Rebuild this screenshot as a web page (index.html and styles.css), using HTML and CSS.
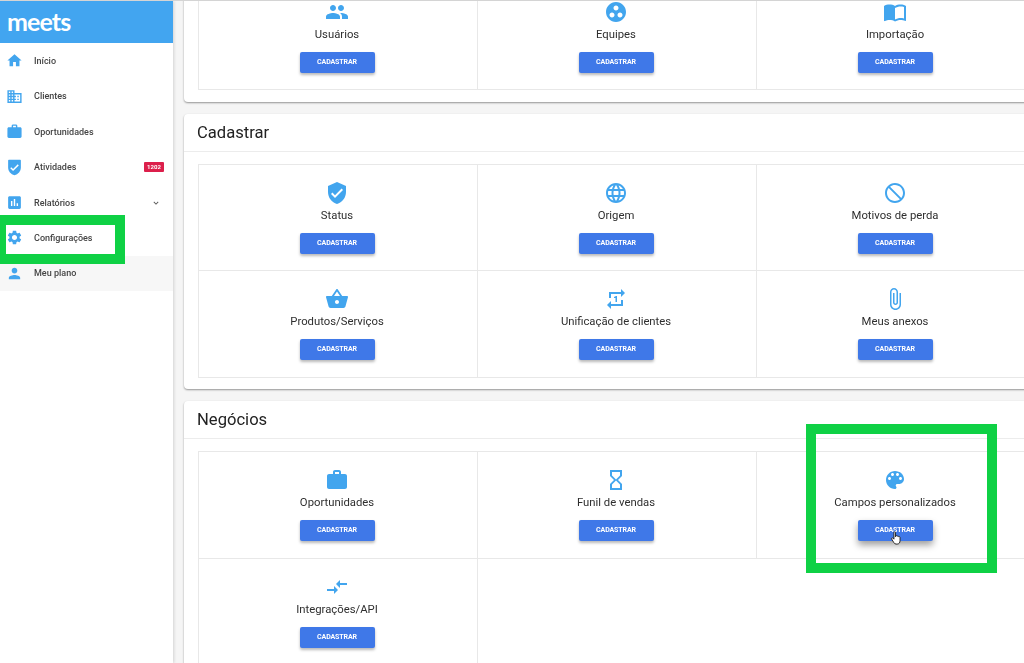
FILE: index.html
```html
<!DOCTYPE html>
<html lang="pt-BR">
<head>
<meta charset="utf-8">
<title>meets</title>
<link rel="stylesheet" href="styles.css">
</head>
<body>
<svg class="defs" width="0" height="0" aria-hidden="true">
<symbol id="i-home" viewBox="0 0 24 24"><path d="M10 20v-6h4v6h5v-8h3L12 3 2 12h3v8z"/></symbol>
<symbol id="i-domain" viewBox="0 0 24 24"><path d="M12 7V3H2v18h20V7H12zM6 19H4v-2h2v2zm0-4H4v-2h2v2zm0-4H4V9h2v2zm0-4H4V5h2v2zm4 12H8v-2h2v2zm0-4H8v-2h2v2zm0-4H8V9h2v2zm0-4H8V5h2v2zm10 12h-8v-2h2v-2h-2v-2h2v-2h-2V9h8v10zm-2-8h-2v2h2v-2zm0 4h-2v2h2v-2z"/></symbol>
<symbol id="i-work" viewBox="0 0 24 24"><path d="M20 6h-4V4c0-1.11-.89-2-2-2h-4c-1.11 0-2 .89-2 2v2H4c-1.11 0-1.99.89-1.99 2L2 19c0 1.11.89 2 2 2h16c1.11 0 2-.89 2-2V8c0-1.11-.89-2-2-2zm-6 0h-4V4h4v2z"/></symbol>
<symbol id="i-verified" viewBox="0 0 24 24"><path d="M12 1L3 5v6c0 5.55 3.84 10.74 9 12 5.16-1.26 9-6.45 9-12V5l-9-4zm-2 16l-4-4 1.41-1.41L10 14.17l6.59-6.59L18 9l-8 8z"/></symbol>
<symbol id="i-shield-flat" viewBox="0 0 24 24"><path fill-rule="evenodd" d="M4 1h16c.55 0 1 .45 1 1v10c0 5.2-3.8 9.6-9 11-5.2-1.4-9-5.800-9-11V2c0-.55.45-1 1-1zm6 16l8-8-1.410-1.420L10 14.170l-2.590-2.580L6 13z"/></symbol>
<symbol id="i-assess" viewBox="0 0 24 24"><path d="M19 3H5c-1.1 0-2 .9-2 2v14c0 1.1.9 2 2 2h14c1.1 0 2-.9 2-2V5c0-1.1-.9-2-2-2zM9 17H7v-7h2v7zm4 0h-2V7h2v10zm4 0h-2v-4h2v4z"/></symbol>
<symbol id="i-settings" viewBox="0 0 24 24"><path d="M19.14 12.94c.04-.3.06-.61.06-.94 0-.32-.02-.64-.07-.94l2.03-1.58c.18-.14.23-.41.12-.61l-1.92-3.32c-.12-.22-.37-.29-.59-.22l-2.39.96c-.5-.38-1.03-.7-1.62-.94l-.36-2.54c-.04-.24-.24-.41-.48-.41h-3.84c-.24 0-.43.17-.47.41l-.36 2.54c-.59.24-1.13.57-1.62.94l-2.39-.96c-.22-.08-.47 0-.59.22L2.74 8.87c-.12.21-.08.47.12.61l2.03 1.58c-.05.3-.09.63-.09.94s.02.64.07.94l-2.03 1.58c-.18.14-.23.41-.12.61l1.92 3.32c.12.22.37.29.59.22l2.39-.96c.5.38 1.03.7 1.62.94l.36 2.54c.05.24.24.41.48.41h3.84c.24 0 .44-.17.47-.41l.36-2.54c.59-.24 1.13-.56 1.62-.94l2.39.96c.22.08.47 0 .59-.22l1.92-3.32c.12-.22.07-.47-.12-.61l-2.01-1.58zM12 15.6c-1.98 0-3.6-1.62-3.6-3.6s1.62-3.6 3.6-3.6 3.6 1.62 3.6 3.6-1.62 3.6-3.6 3.6z"/></symbol>
<symbol id="i-person" viewBox="0 0 24 24"><path d="M12 12c2.21 0 4-1.79 4-4s-1.79-4-4-4-4 1.79-4 4 1.79 4 4 4zm0 2c-2.67 0-8 1.34-8 4v2h16v-2c0-2.66-5.33-4-8-4z"/></symbol>
<symbol id="i-people" viewBox="0 0 24 24"><path d="M16 11c1.66 0 2.99-1.34 2.99-3S17.66 5 16 5c-1.66 0-3 1.34-3 3s1.34 3 3 3zm-8 0c1.66 0 2.99-1.34 2.99-3S9.66 5 8 5C6.34 5 5 6.34 5 8s1.34 3 3 3zm0 2c-2.33 0-7 1.17-7 3.5V19h14v-2.5c0-2.33-4.67-3.5-7-3.5zm8 0c-.29 0-.62.02-.97.05 1.16.84 1.97 1.97 1.97 3.45V19h6v-2.5c0-2.33-4.67-3.5-7-3.5z"/></symbol>
<symbol id="i-group" viewBox="0 0 24 24"><path d="M12 2C6.48 2 2 6.48 2 12s4.48 10 10 10 10-4.48 10-10S17.52 2 12 2zM8 17.5c-1.38 0-2.5-1.12-2.5-2.5s1.12-2.5 2.5-2.5 2.5 1.12 2.5 2.5-1.12 2.5-2.5 2.5zM9.5 8c0-1.38 1.12-2.5 2.5-2.5s2.5 1.12 2.5 2.5-1.12 2.5-2.5 2.5S9.5 9.38 9.5 8zm6.5 9.5c-1.38 0-2.5-1.12-2.5-2.5s1.12-2.5 2.5-2.5 2.5 1.12 2.5 2.5-1.12 2.5-2.5 2.5z"/></symbol>
<symbol id="i-book" viewBox="0 0 24 24"><path d="M21 5c-1.11-.35-2.33-.5-3.5-.5-1.95 0-4.05.4-5.5 1.5-1.45-1.1-3.55-1.5-5.5-1.5S2.45 4.9 1 6v14.65c0 .25.25.5.5.5.1 0 .15-.05.25-.05C3.1 20.45 5.05 20 6.5 20c1.95 0 4.05.4 5.5 1.5 1.35-.85 3.8-1.5 5.5-1.5 1.65 0 3.35.3 4.75 1.05.1.05.15.05.25.05.25 0 .5-.25.5-.5V6c-.6-.45-1.25-.75-2-1zm0 13.5c-1.1-.35-2.3-.5-3.5-.5-1.7 0-4.15.65-5.5 1.5V8c1.35-.85 3.8-1.5 5.5-1.5 1.2 0 2.4.15 3.5.5v11.5z"/></symbol>
<symbol id="i-globe" viewBox="0 0 24 24"><path d="M11.99 2C6.47 2 2 6.48 2 12s4.47 10 9.99 10C17.52 22 22 17.52 22 12S17.52 2 11.99 2zm6.93 6h-2.95c-.32-1.25-.78-2.45-1.38-3.56 1.84.63 3.37 1.91 4.33 3.56zM12 4.04c.83 1.2 1.48 2.53 1.91 3.96h-3.82c.43-1.43 1.08-2.76 1.91-3.96zM4.26 14C4.1 13.36 4 12.69 4 12s.1-1.36.26-2h3.38c-.08.66-.14 1.32-.14 2 0 .68.06 1.34.14 2H4.26zm.82 2h2.95c.32 1.25.78 2.45 1.38 3.56-1.84-.63-3.37-1.9-4.33-3.56zm2.95-8H5.08c.96-1.66 2.49-2.93 4.33-3.56C8.81 5.55 8.35 6.75 8.03 8zM12 19.96c-.83-1.2-1.48-2.53-1.91-3.96h3.82c-.43 1.43-1.08 2.76-1.91 3.96zM14.34 14H9.66c-.09-.66-.16-1.32-.16-2 0-.68.07-1.35.16-2h4.68c.09.65.16 1.32.16 2 0 .68-.07 1.34-.16 2zm.25 5.56c.6-1.11 1.06-2.31 1.38-3.56h2.95c-.96 1.65-2.49 2.93-4.33 3.56zM16.36 14c.08-.66.14-1.32.14-2 0-.68-.06-1.34-.14-2h3.38c.16.64.26 1.31.26 2s-.1 1.36-.26 2h-3.38z"/></symbol>
<symbol id="i-block" viewBox="0 0 24 24"><path d="M12 2C6.48 2 2 6.48 2 12s4.48 10 10 10 10-4.48 10-10S17.52 2 12 2zM4 12c0-4.42 3.58-8 8-8 1.85 0 3.55.63 4.9 1.69L5.69 16.9C4.63 15.55 4 13.85 4 12zm8 8c-1.85 0-3.55-.63-4.9-1.69L18.31 7.1C19.37 8.45 20 10.15 20 12c0 4.42-3.58 8-8 8z"/></symbol>
<symbol id="i-basket" viewBox="0 0 24 24"><path d="M17.21 9l-4.38-6.56c-.19-.28-.51-.42-.83-.42-.32 0-.64.14-.83.43L6.79 9H2c-.55 0-1 .45-1 1 0 .09.01.18.04.27l2.54 9.27c.23.84 1 1.46 1.92 1.46h13c.92 0 1.69-.62 1.93-1.46l2.54-9.27L23 10c0-.55-.45-1-1-1h-4.79zM9 9l3-4.4L15 9H9zm3 8c-1.1 0-2-.9-2-2s.9-2 2-2 2 .9 2 2-.9 2-2 2z"/></symbol>
<symbol id="i-repeat" viewBox="0 0 24 24"><path d="M7 7h10v3l4-4-4-4v3H5v6h2V7zm10 10H7v-3l-4 4 4 4v-3h12v-6h-2v4zm-4-2V9h-1l-2 1v1h1.5v4H13z"/></symbol>
<symbol id="i-clip" viewBox="0 0 24 24"><path d="M16.5 6v11.5c0 2.21-1.79 4-4 4s-4-1.79-4-4V5c0-1.38 1.12-2.5 2.5-2.5s2.5 1.12 2.5 2.5v10.5c0 .55-.45 1-1 1s-1-.45-1-1V6H10v9.5c0 1.38 1.12 2.5 2.5 2.5s2.5-1.12 2.5-2.5V5c0-2.21-1.79-4-4-4S7 2.79 7 5v12.5c0 3.04 2.46 5.5 5.5 5.5s5.5-2.46 5.5-5.5V6h-1.5z"/></symbol>
<symbol id="i-hourglass" viewBox="0 0 24 24"><path d="M6 2v6h.01L6 8.01 10 12l-4 4 .01.01H6V22h12v-5.99h-.01L18 16l-4-4 4-3.99-.01-.01H18V2H6zm10 14.5V20H8v-3.5l4-4 4 4zm-4-5l-4-4V4h8v3.5l-4 4z"/></symbol>
<symbol id="i-palette" viewBox="0 0 24 24"><path d="M12 3c-4.97 0-9 4.03-9 9s4.03 9 9 9c.83 0 1.5-.67 1.5-1.5 0-.39-.15-.74-.39-1.01-.23-.26-.38-.61-.38-.99 0-.83.67-1.5 1.5-1.5H16c2.76 0 5-2.24 5-5 0-4.42-4.03-8-9-8zm-5.5 9c-.83 0-1.5-.67-1.5-1.5S5.67 9 6.5 9 8 9.67 8 10.5 7.33 12 6.5 12zm3-4C8.67 8 8 7.33 8 6.5S8.67 5 9.5 5s1.5.67 1.5 1.5S10.33 8 9.5 8zm5 0c-.83 0-1.5-.67-1.5-1.5S13.67 5 14.5 5s1.5.67 1.5 1.5S15.33 8 14.5 8zm3 4c-.83 0-1.5-.67-1.5-1.5S16.67 9 17.5 9s1.5.67 1.5 1.5-.67 1.5-1.5 1.5z"/></symbol>
<symbol id="i-compare" viewBox="0 0 24 24"><path d="M9.01 14H2v2h7.01v3L13 15l-3.99-4v3zm5.98-1v-3H22V8h-7.01V5L11 9l3.99 4z"/></symbol>
<symbol id="i-more" viewBox="0 0 24 24"><path d="M16.59 8.59L12 13.17 7.41 8.59 6 10l6 6 6-6z"/></symbol>
</svg>

<div class="app">
  <aside class="sidebar">
    <div class="brand">meets</div>
    <nav class="nav">
      <a class="nav-item"><svg class="nav-icon"><use href="#i-home"/></svg><span class="nav-label">Início</span></a>
      <a class="nav-item"><svg class="nav-icon"><use href="#i-domain"/></svg><span class="nav-label">Clientes</span></a>
      <a class="nav-item"><svg class="nav-icon"><use href="#i-work"/></svg><span class="nav-label">Oportunidades</span></a>
      <a class="nav-item"><svg class="nav-icon"><use href="#i-shield-flat"/></svg><span class="nav-label">Atividades</span><span class="badge">1202</span></a>
      <a class="nav-item"><svg class="nav-icon"><use href="#i-assess"/></svg><span class="nav-label">Relatórios</span><svg class="chevron"><use href="#i-more"/></svg></a>
      <a class="nav-item"><svg class="nav-icon"><use href="#i-settings"/></svg><span class="nav-label">Configurações</span></a>
      <a class="nav-item nav-item-muted"><svg class="nav-icon"><use href="#i-person"/></svg><span class="nav-label">Meu plano</span></a>
    </nav>
  </aside>

  <main class="main">
    <div class="scroll">
      <section class="card card-cut">
        <div class="grid">
          <div class="cell"><svg class="cell-icon"><use href="#i-people"/></svg><div class="cell-label">Usuários</div><button class="btn">CADASTRAR</button></div>
          <div class="cell"><svg class="cell-icon"><use href="#i-group"/></svg><div class="cell-label">Equipes</div><button class="btn">CADASTRAR</button></div>
          <div class="cell"><svg class="cell-icon"><use href="#i-book"/></svg><div class="cell-label">Importação</div><button class="btn">CADASTRAR</button></div>
        </div>
      </section>

      <section class="card">
        <h2 class="card-title">Cadastrar</h2>
        <div class="grid">
          <div class="cell"><svg class="cell-icon"><use href="#i-verified"/></svg><div class="cell-label">Status</div><button class="btn">CADASTRAR</button></div>
          <div class="cell"><svg class="cell-icon"><use href="#i-globe"/></svg><div class="cell-label">Origem</div><button class="btn">CADASTRAR</button></div>
          <div class="cell"><svg class="cell-icon icon-flip"><use href="#i-block"/></svg><div class="cell-label">Motivos de perda</div><button class="btn">CADASTRAR</button></div>
          <div class="cell"><svg class="cell-icon"><use href="#i-basket"/></svg><div class="cell-label">Produtos/Serviços</div><button class="btn">CADASTRAR</button></div>
          <div class="cell"><svg class="cell-icon"><use href="#i-repeat"/></svg><div class="cell-label">Unificação de clientes</div><button class="btn">CADASTRAR</button></div>
          <div class="cell"><svg class="cell-icon"><use href="#i-clip"/></svg><div class="cell-label">Meus anexos</div><button class="btn">CADASTRAR</button></div>
        </div>
      </section>

      <section class="card card-last">
        <h2 class="card-title">Negócios</h2>
        <div class="grid">
          <div class="cell"><svg class="cell-icon"><use href="#i-work"/></svg><div class="cell-label">Oportunidades</div><button class="btn">CADASTRAR</button></div>
          <div class="cell"><svg class="cell-icon"><use href="#i-hourglass"/></svg><div class="cell-label">Funil de vendas</div><button class="btn">CADASTRAR</button></div>
          <div class="cell"><svg class="cell-icon"><use href="#i-palette"/></svg><div class="cell-label">Campos personalizados</div><button class="btn btn-hover">CADASTRAR</button></div>
          <div class="cell"><svg class="cell-icon"><use href="#i-compare"/></svg><div class="cell-label">Integrações/API</div><button class="btn">CADASTRAR</button></div>
        </div>
      </section>
    </div>
  </main>
</div>

<svg class="pointer" viewBox="0 0 12 14" aria-hidden="true"><path d="M3.6 1.4c0-.9 1.5-.9 1.5 0v4l.3-.9c.5-.4 1.2-.2 1.3.4.5-.4 1.2-.2 1.3.4.6-.3 1.3 0 1.3.7v3.2c0 1.6-1 3-2.600 3H5.600c-1 0-1.600-.6-2.100-1.400L1.400 7.400c-.4-.8.6-1.400 1.200-.8l1 1z" fill="#fff" stroke="#222" stroke-width=".9" stroke-linejoin="round"/></svg>
<div class="mark mark-menu"></div>
<div class="mark mark-field"></div>
</body>
</html>
```

FILE: styles.css
```css
* { box-sizing: border-box; }
html, body { margin: 0; height: 100%; overflow: hidden; }
body { font-family: Roboto, "Liberation Sans", sans-serif; background: #f5f5f5; color: #333; }
.defs { position: absolute; }

.app { display: flex; width: 1024px; height: 663px; overflow: hidden; filter: blur(.45px); border-top: 1px solid #d4d4d4; }

.sidebar { flex: 0 0 173px; background: #fff; box-shadow: 1px 0 3px rgba(0,0,0,.14); z-index: 1; }
.brand { height: 42px; background: #42a5f0; color: #fff; padding-left: 7px; font: 700 25px/41px Lato, sans-serif; letter-spacing: -.9px; }
.nav { display: flex; flex-direction: column; padding-top: .3px; }
.nav-item { display: flex; align-items: center; height: 35.4px; padding: 0 9px 0 6px; }
.nav-item-muted { background: #f7f7f7; }
.nav-icon { width: 17px; height: 17px; fill: #42a5ee; flex: none; }
.nav-label { margin-left: 11px; flex: 1; font-size: 9px; font-weight: 500; color: #444; }
.badge { background: #dc1f4b; color: #fff; font-size: 6px; font-weight: 700; line-height: 10px; height: 10px; width: 20px; text-align: center; border-radius: 1px; }
.chevron { width: 10px; height: 10px; fill: #555; margin-right: 3px; }

.main { flex: 1; min-width: 0; height: 663px; overflow: hidden; }
.scroll { width: 865px; margin: -17px 0 0 11px; display: flex; flex-direction: column; gap: 11px; }
.card { background: #fff; border-radius: 4px; box-shadow: 0 1px 2px rgba(0,0,0,.4); padding-bottom: 11.5px; }
.card-cut { margin-bottom: 1px; }
.card-last { margin-top: 1px; }
.card-title { margin: 0 0 12px; height: 38px; padding-left: 13px; font-size: 16.6px; font-weight: 400; line-height: 38px; color: #222; border-bottom: 1px solid #ececec; }
.grid { display: grid; grid-template-columns: repeat(3, 279px); grid-auto-rows: 106.4px; margin-left: 14px; border-left: 1px solid #e8e8e8; border-top: 1px solid #e8e8e8; }
.card-cut .grid { border-top: 0; }

.cell { display: flex; flex-direction: column; align-items: center; padding: 16px 2px 0 0; border-right: 1px solid #e8e8e8; border-bottom: 1px solid #e8e8e8; }
.cell-icon { width: 24px; height: 24px; fill: #42a5ee; flex: none; }
.icon-flip { transform: scaleX(-1); }
.cell-label { margin-top: 2px; height: 18px; font-size: 11.3px; line-height: 18px; color: #2e2e2e; white-space: nowrap; }
.btn { margin-top: 8px; width: 75px; height: 21px; padding: 0; border: 0; border-radius: 2px; background: #3f78e8; color: #fff; font: 700 7px/21px Roboto, sans-serif; letter-spacing: -.1px; box-shadow: 0 2px 3px rgba(0,0,0,.28); }
.btn-hover { box-shadow: 0 4px 7px rgba(0,0,0,.38); }

.pointer { position: absolute; left: 890px; top: 531px; width: 13px; height: 15px; }
.mark { position: absolute; border: 10px solid #0fd145; }
.mark-menu { left: -4px; top: 215px; width: 129px; height: 49px; }
.mark-field { left: 806px; top: 424px; width: 191px; height: 149px; }
```
